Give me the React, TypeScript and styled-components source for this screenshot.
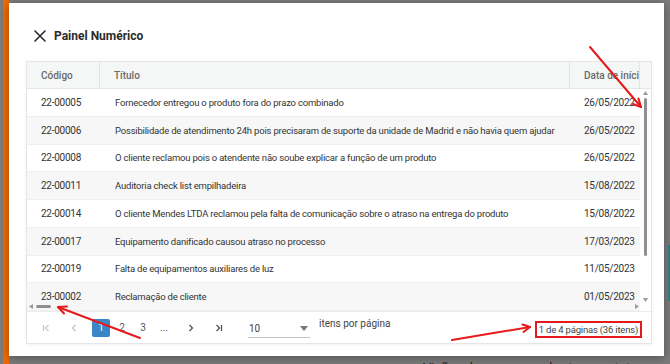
import React from 'react'
import styled, {createGlobalStyle} from 'styled-components'

const GlobalStyle = createGlobalStyle`
  html, body {
    margin: 0;
    padding: 0;
  }
  body {
    width: 670px;
    height: 364px;
    overflow: hidden;
    background: #7c7c7c;
    font-family: Roboto, "Liberation Sans", sans-serif;
  }
`

const Page = styled.div`
  position: relative;
  display: flex;
  width: 670px;
  height: 364px;
  overflow: hidden;
  background: #7c7c7c;
`

const OrangeBar = styled.div`
  flex-shrink: 0;
  margin-left: 3px;
  width: 6px;
  height: 100%;
  background: #ef6a06;
`

const Center = styled.div`
  flex-shrink: 0;
  display: flex;
  flex-direction: column;
  width: 655px;
`

const RightEdge = styled.div`
  flex: 1;
  display: flex;
  flex-direction: column;
  align-items: flex-end;
`

const TealBlock = styled.div`
  margin-top: 245px;
  width: 2px;
  height: 56px;
  background: #2b7b76;
`

const BehindText = styled.div`
  flex-shrink: 0;
  margin-top: 5px;
  padding-left: 414px;
  font-size: 13px;
  line-height: 13px;
  color: #1e1e1e;
  white-space: nowrap;
`

const Modal = styled.div`
  box-sizing: border-box;
  flex-shrink: 0;
  margin-top: 3px;
  height: 353px;
  padding: 0 12px 0 17px;
  display: flex;
  flex-direction: column;
  background: #fff;
  box-shadow: 0 2px 10px rgba(0, 0, 0, 0.35);
`

const TitleBar = styled.div`
  box-sizing: border-box;
  flex-shrink: 0;
  height: 58px;
  padding: 8px 0 0 8px;
  display: flex;
  align-items: center;
  gap: 8px;
`

const Title = styled.span`
  font-size: 12px;
  font-weight: 700;
  color: #2b2b2b;
`

const Card = styled.div`
  box-sizing: border-box;
  flex-shrink: 0;
  height: 283px;
  display: flex;
  flex-direction: column;
  border: 1px solid #e6e6e6;
  box-shadow: 0 1px 3px rgba(0, 0, 0, 0.06);
`

const COLS = '73px 470px 70px 10px'

const HeaderRow = styled.div`
  flex-shrink: 0;
  display: grid;
  grid-template-columns: ${COLS};
  height: 26px;
  background: #f5f6f6;
  border-bottom: 1px solid #e6e6e6;
`

const HeaderCell = styled.div<{$pad: number}>`
  display: flex;
  align-items: center;
  padding-left: ${p => p.$pad}px;
  border-right: 1px solid #e4e4e4;
  overflow: hidden;
  white-space: nowrap;
  font-size: 10px;
  font-weight: 500;
  color: #6a6a6a;
  &:last-child {
    border-right: none;
  }
`

const Body = styled.div`
  flex-shrink: 0;
  display: flex;
  height: 222px;
`

const RowsArea = styled.div`
  position: relative;
  width: 613px;
  overflow: hidden;
`

const Row = styled.div<{$alt: boolean}>`
  box-sizing: border-box;
  display: grid;
  grid-template-columns: 73px 470px 70px;
  height: 27.75px;
  background: ${p => (p.$alt ? '#f7f7f7' : '#fff')};
  border-bottom: 1px solid #efefef;
`

const Cell = styled.div<{$pad: number; $narrow?: boolean}>`
  display: flex;
  align-items: center;
  padding-left: ${p => p.$pad}px;
  white-space: nowrap;
  overflow: hidden;
  font-size: ${p => (p.$narrow ? 9.5 : 10)}px;
  letter-spacing: ${p => (p.$narrow ? -0.2 : -0.25)}px;
  color: #333;
`

const VScroll = styled.div`
  width: 10px;
  display: flex;
  flex-direction: column;
  align-items: center;
  padding-top: 2px;
  box-sizing: border-box;
`

const VThumb = styled.div`
  margin-top: 3px;
  width: 3px;
  height: 158px;
  border-radius: 2px;
  background: #8f8f8f;
`

const VSpacer = styled.div`
  flex: 1;
`

const HScroll = styled.div`
  position: absolute;
  left: 0;
  right: 0;
  bottom: 1px;
  height: 7px;
  display: flex;
  align-items: center;
  padding: 0 1px 0 2px;
`

const HThumb = styled.div`
  margin-left: 3px;
  width: 15px;
  height: 3px;
  border-radius: 2px;
  background: #8f8f8f;
`

const Pager = styled.div`
  flex: 1;
  display: flex;
  align-items: center;
  gap: 3px;
  padding: 0 9px 0 8px;
  border-top: 1px solid #ececec;
  font-size: 10px;
  color: #555;
`

const PagerIcon = styled.div<{$space?: number}>`
  width: 24px;
  height: 18px;
  margin-left: ${p => p.$space ?? 0}px;
  display: flex;
  align-items: center;
  justify-content: center;
`

const PageNum = styled.div<{$active?: boolean; $space?: number}>`
  width: 18px;
  height: 18px;
  margin-left: ${p => p.$space ?? 0}px;
  display: flex;
  align-items: center;
  justify-content: center;
  border-radius: 2px;
  background: ${p => (p.$active ? '#3b86c6' : 'transparent')};
  color: ${p => (p.$active ? '#fff' : '#555')};
`

const PageSize = styled.div`
  box-sizing: border-box;
  align-self: flex-end;
  margin: 0 0 5px 15px;
  width: 62px;
  height: 20px;
  display: flex;
  align-items: center;
  justify-content: space-between;
  padding: 1px 2px 0 1px;
  border-bottom: 1px solid #c4c4c4;
  font-size: 10px;
  color: #444;
`

const Caret = styled.span`
  width: 0;
  height: 0;
  border-left: 4.5px solid transparent;
  border-right: 4.5px solid transparent;
  border-top: 5px solid #777;
`

const PerPage = styled.span`
  margin: 0 0 8px 6px;
  color: #444;
`

const PagerSpacer = styled.div`
  flex: 1;
`

const PageInfo = styled.span`
  margin-top: 3px;
  padding: 1px 2px;
  border: 2px solid #e3191c;
  font-size: 9.5px;
  letter-spacing: -0.2px;
  color: #444;
  white-space: nowrap;
`

const Annotations = styled.svg`
  position: absolute;
  left: 0;
  top: 0;
  width: 670px;
  height: 364px;
  pointer-events: none;
`

const rows = [
  ['22-00005', 'Fornecedor entregou o produto fora do prazo combinado', '26/05/2022'],
  ['22-00006', 'Possibilidade de atendimento 24h pois precisaram de suporte da unidade de Madrid e não havia quem ajudar', '26/05/2022'],
  ['22-00008', 'O cliente reclamou pois o atendente não soube explicar a função de um produto', '26/05/2022'],
  ['22-00011', 'Auditoria check list empilhadeira', '15/08/2022'],
  ['22-00014', 'O cliente Mendes LTDA reclamou pela falta de comunicação sobre o atraso na entrega do produto', '15/08/2022'],
  ['22-00017', 'Equipamento danificado causou atraso no processo', '17/03/2023'],
  ['22-00019', 'Falta de equipamentos auxiliares de luz', '11/05/2023'],
  ['23-00002', 'Reclamação de cliente', '01/05/2023'],
]

const CloseIcon = () =>
  <svg width="12" height="12" viewBox="0 0 12 12">
    <path d="M1 1 L11 11 M11 1 L1 11" stroke="#2b2b2b" strokeWidth="1.6" strokeLinecap="round" />
  </svg>

const Chevron = ({dir, bar, color}: {dir: 'left' | 'right', bar?: boolean, color: string}) =>
  <svg width="10" height="10" viewBox="0 0 10 10">
    {dir === 'left'
      ? <path d={`M6.5 2 L3.5 5 L6.5 8${bar ? ' M1.5 2 L1.5 8' : ''}`} stroke={color} strokeWidth="1.3" fill="none" />
      : <path d={`M3.5 2 L6.5 5 L3.5 8${bar ? ' M8.5 2 L8.5 8' : ''}`} stroke={color} strokeWidth="1.3" fill="none" />}
  </svg>

const Arrow = ({d, head}: {d: string, head: string}) =>
  <g stroke="#e8191b" strokeWidth="2" fill="none" strokeLinecap="round" strokeLinejoin="round">
    <path d={d} />
    <path d={head} />
  </g>

export default function App() {
  return <>
    <GlobalStyle />
    <Page>
      <OrangeBar />
      <Center>
        <Modal>
          <TitleBar>
            <CloseIcon />
            <Title>Painel Numérico</Title>
          </TitleBar>
          <Card>
            <HeaderRow>
              <HeaderCell $pad={14}>Código</HeaderCell>
              <HeaderCell $pad={14}>Título</HeaderCell>
              <HeaderCell $pad={14}>Data de início</HeaderCell>
              <HeaderCell $pad={0} />
            </HeaderRow>
            <Body>
              <RowsArea>
                {rows.map((r, i) =>
                  <Row key={r[0]} $alt={i % 2 === 1}>
                    <Cell $pad={14}>{r[0]}</Cell>
                    <Cell $pad={15} $narrow>{r[1]}</Cell>
                    <Cell $pad={14}>{r[2]}</Cell>
                  </Row>
                )}
                <HScroll>
                  <svg width="4" height="5" viewBox="0 0 4 5"><path d="M4 0 L0 2.5 L4 5 Z" fill="#999" /></svg>
                  <HThumb />
                  <VSpacer />
                  <svg width="4" height="5" viewBox="0 0 4 5"><path d="M0 0 L4 2.5 L0 5 Z" fill="#999" /></svg>
                </HScroll>
              </RowsArea>
              <VScroll>
                <svg width="5" height="4" viewBox="0 0 5 4"><path d="M0 4 L2.5 0 L5 4 Z" fill="#999" /></svg>
                <VThumb />
                <VSpacer />
                <svg width="5" height="4" viewBox="0 0 5 4" style={{marginBottom: 9}}><path d="M0 0 L2.5 4 L5 0 Z" fill="#999" /></svg>
              </VScroll>
            </Body>
            <Pager>
              <PagerIcon><Chevron dir="left" bar color="#c9c9c9" /></PagerIcon>
              <PagerIcon><Chevron dir="left" color="#c9c9c9" /></PagerIcon>
              <PageNum $active $space={3}>1</PageNum>
              <PageNum>2</PageNum>
              <PageNum>3</PageNum>
              <PageNum>...</PageNum>
              <PagerIcon $space={3}><Chevron dir="right" color="#555" /></PagerIcon>
              <PagerIcon><Chevron dir="right" bar color="#555" /></PagerIcon>
              <PageSize>10<Caret /></PageSize>
              <PerPage>itens por página</PerPage>
              <PagerSpacer />
              <PageInfo>1 de 4 páginas (36 itens)</PageInfo>
            </Pager>
          </Card>
        </Modal>
        <BehindText>Visões de casos em aberto, por status</BehindText>
      </Center>
      <RightEdge>
        <TealBlock />
      </RightEdge>
      <Annotations viewBox="0 0 670 364">
        <Arrow d="M590 47 L641 107" head="M638.5 98.5 L641 107 L633 104" />
        <Arrow d="M140 338 L58 307" head="M64 313.5 L58 307 L67 306.5" />
        <Arrow d="M452 340 L530 327" head="M522.5 324.5 L530 327 L523.5 332" />
      </Annotations>
    </Page>
  </>
}
